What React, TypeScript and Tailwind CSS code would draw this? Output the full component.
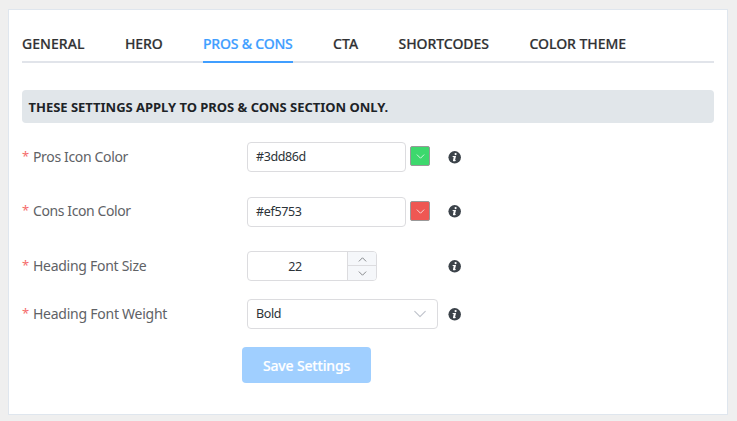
import React from "react";

const tabs = [
  { label: "GENERAL", cls: "w-[63px] tracking-[0.05px]" },
  { label: "HERO", cls: "w-[38px] tracking-[-0.15px]" },
  { label: "PROS & CONS", cls: "w-[90px] tracking-[-0.2px]", active: true },
  { label: "CTA", cls: "w-[25.5px] tracking-[0.1px]" },
  { label: "SHORTCODES", cls: "w-[91px] tracking-[-0.05px]" },
  { label: "COLOR THEME", cls: "w-[98px] tracking-[-0.05px]" },
];

function Chevron({ size, up = false, className = "", stroke = 1 }: { size: number; up?: boolean; className?: string; stroke?: number }) {
  return (
    <svg width={size} height={size} viewBox="0 0 12 12" fill="none" stroke="currentColor" strokeWidth={stroke} className={className}>
      <path d={up ? "M1.5 8.2 L6 3.7 L10.5 8.2" : "M1.5 3.8 L6 8.3 L10.5 3.8"} strokeLinecap="round" strokeLinejoin="round" />
    </svg>
  );
}

function Info({ className = "" }: { className?: string }) {
  return (
    <svg width="13" height="13" viewBox="0 0 13 13" className={`block shrink-0 ${className}`}>
      <circle cx="6.7" cy="6.3" r="6.25" fill="#3c434a" />
      <circle cx="7.6" cy="3.1" r="1.1" fill="#fff" />
      <path d="M4.700 5h3.300L7.100 9h.7l-.3 1C6.300 10.600 4.700 10.500 5 9.200L5.700 6H4.600z" fill="#fff" />
    </svg>
  );
}

type RowProps = { label: string; labelCls: string; className: string; infoCls?: string; children: React.ReactNode };

function Row({ label, labelCls, className, infoCls, children }: RowProps) {
  return (
    <div className={`flex h-[30px] items-center ${className}`}>
      <div className={`flex w-[225px] shrink-0 text-[14px] leading-5 whitespace-nowrap text-[#606266] ${labelCls}`}>
        <span className="w-[11px] -translate-y-px text-[13px] text-[#f56c6c]">*</span>
        <span>{label}</span>
      </div>
      <div className="flex w-[201px] shrink-0 items-center">{children}</div>
      <Info className={infoCls} />
    </div>
  );
}

function ColorField({ value, swatch, textCls }: { value: string; swatch: string; textCls: string }) {
  return (
    <>
      <div className="flex h-[30px] w-[159px] items-center rounded-[4px] border border-[#dcdcdf] px-2 pt-px text-[12.5px] text-[#2c3338]">
        <span className={textCls}>{value}</span>
      </div>
      <div className={`ml-1 flex size-5 -translate-y-px items-center justify-center rounded-[2px] border border-[#999] text-white ${swatch}`}>
        <Chevron size={9} />
      </div>
    </>
  );
}

export default function App() {
  return (
    <div className="h-[421px] w-[737px] bg-[#efefef] pt-[9px] pl-2 font-['Noto_Sans',sans-serif]">
      <main className="h-[406px] w-[720px] border border-[#dfe6ee] bg-white px-[13px]">
        <nav className="mt-[17px] flex h-[36px] gap-10 border-b-2 border-[#e1e4ea]">
          {tabs.map((t) => (
            <div
              key={t.label}
              className={`h-[36px] shrink-0 text-[14px] leading-[34px] font-medium whitespace-nowrap [-webkit-text-stroke:0.2px] ${t.cls} ${t.active ? "border-b-2 border-[#409eff] text-[#409eff]" : "text-[#303133]"}`}
            >
              {t.label}
            </div>
          ))}
        </nav>
        <div className="mt-[27px] flex h-[33px] items-center rounded-[4px] bg-[#e1e6ea] pt-[2px] pl-[6.5px] text-[13px] font-bold tracking-[-0.02px] whitespace-nowrap text-[#1d2327]">
          THESE SETTINGS APPLY TO PROS &amp; CONS SECTION ONLY.
        </div>
        <Row label="Pros Icon Color" labelCls="tracking-[-0.35px]" className="mt-[19px]">
          <ColorField value="#3dd86d" swatch="bg-[#3dd86d]" textCls="tracking-[-0.4px]" />
        </Row>
        <Row label="Cons Icon Color" labelCls="tracking-[-0.4px] -translate-y-px" className="mt-[25px]" infoCls="-translate-y-px">
          <ColorField value="#ef5753" swatch="bg-[#ef5753]" textCls="tracking-[-0.35px]" />
        </Row>
        <Row label="Heading Font Size" labelCls="tracking-[-0.28px]" className="mt-[24px]">
          <div className="flex h-[30px] w-[130px] overflow-hidden rounded-[4px] border border-[#dcdcdf] text-[12.5px] text-[#2c3338]">
            <div className="flex w-[99px] shrink-0 items-center justify-center pt-[2px] pr-[5px] tracking-[-0.3px]">22</div>
            <div className="flex w-[29px] shrink-0 flex-col border-l border-[#dcdcdf] bg-[#f5f7fa] text-[#707276]">
              <div className="flex h-[14px] items-center justify-center border-b border-[#dcdcdf] pt-[2px]">
                <Chevron size={9} up stroke={1.1} />
              </div>
              <div className="flex h-[14px] items-center justify-center pt-px">
                <Chevron size={9} stroke={1.1} />
              </div>
            </div>
          </div>
        </Row>
        <Row label="Heading Font Weight" labelCls="tracking-[-0.25px]" className="mt-[18px]">
          <div className="flex h-[30px] w-[191px] items-center justify-between rounded-[4px] border border-[#dcdcdf] pr-[10px] pl-2 text-[12.5px] text-[#2c3338]">
            <span className="pt-px tracking-[-0.4px]">Bold</span>
            <Chevron size={14} className="text-[#c0c4cc]" />
          </div>
        </Row>
        <button className="mt-[18px] ml-[220px] block h-9 w-[129px] rounded-[4px] bg-[#a0cfff] text-[14px] font-medium tracking-[-0.17px] whitespace-nowrap text-white [-webkit-text-stroke:0.2px]">
          Save Settings
        </button>
      </main>
    </div>
  );
}
